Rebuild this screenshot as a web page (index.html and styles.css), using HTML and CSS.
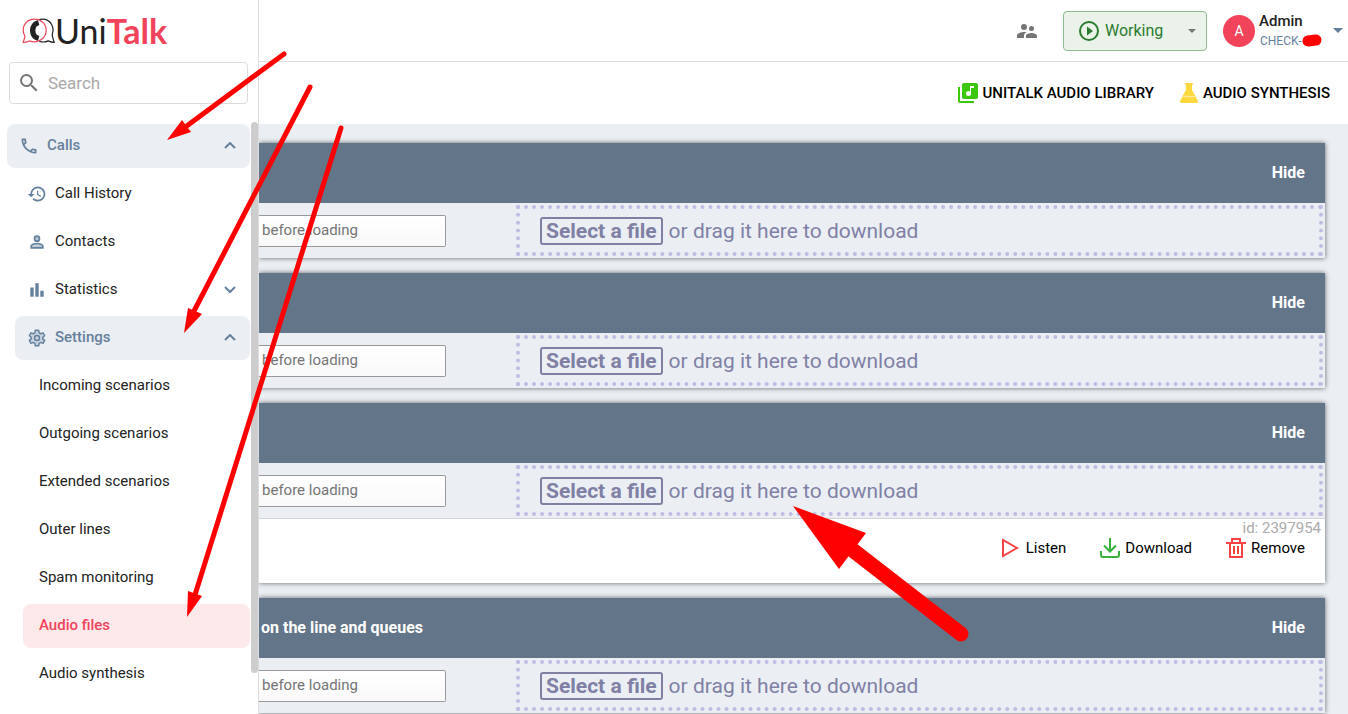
FILE: index.html
```html
<!DOCTYPE html>
<html lang="en">
<head>
    <meta charset="utf-8">
    <title>UniTalk - Audio files</title>
    <link rel="stylesheet" href="styles.css">
</head>
<body>
    <aside class="sidebar">
        <a class="logo" href="#">
            <svg width="33" height="26" viewBox="0 0 33 26" fill="none" stroke-width="1.2">
                <path stroke="#222" d="M17 1.6C19 .9 21 .9 23 1.4c6 1.500 9.500 8 7.500 14-.4 1.400-.4 2.400.2 4l1.500 5c-2.500 0-4-.5-6-1.500-3 1.500-6 1.400-9 .3"/>
                <path stroke="#f1435a" d="M13 1.200C6 1 1 6 1.200 12.500c0 2.500 1 4.500 1.800 6L1.200 24.400c2.500 0 4.500-.5 6.300-1.500C15 26 24 21 24.200 12.500 24.300 6 19 1.200 13 1.200z"/>
                <path fill="#222" d="M16 2.200c-5 .8-8 5.500-8 10.300s3 9.500 8 10.300l1.300-4.700-2.800-1.500c-1.500-2.500-1.500-5.700 0-8.200l2.800-1.400z"/>
            </svg>
            <span class="logo-uni">Uni</span><span class="logo-talk">Talk</span>
        </a>

        <label class="search">
            <svg width="24" height="24" viewBox="0 0 24 24" fill="#757575"><path d="M15.500 14h-.79l-.28-.27A6.470 6.470 0 0 0 16 9.500 6.500 6.500 0 1 0 9.500 16c1.610 0 3.090-.59 4.230-1.570l.27.28v.79l5 4.990L20.490 19l-4.990-5zm-6 0C7.010 14 5 11.990 5 9.500S7.010 5 9.500 5 14 7.010 14 9.500 11.990 14 9.500 14z"/></svg>
            <input type="search" placeholder="Search" aria-label="Search">
        </label>

        <div class="menu-wrap">
            <nav class="menu">
                <a class="item open" href="#">
                    <svg width="20" height="20" viewBox="0 0 24 24" fill="#64809c"><path d="M6.540 5c.06.89.21 1.760.45 2.590l-1.200 1.200c-.41-1.200-.67-2.470-.76-3.790h1.510m9.860 12.020c.85.24 1.720.39 2.600.45v1.490c-1.320-.09-2.590-.35-3.800-.75l1.200-1.190M7.500 3H4c-.55 0-1 .45-1 1 0 9.390 7.610 17 17 17 .55 0 1-.45 1-1v-3.490c0-.55-.45-1-1-1-1.240 0-2.450-.2-3.570-.57-.1-.04-.21-.05-.31-.05-.26 0-.51.1-.71.29l-2.200 2.200a15.150 15.150 0 0 1-6.590-6.590l2.200-2.200c.28-.28.36-.67.25-1.020A11.360 11.360 0 0 1 8.500 4c0-.55-.45-1-1-1z"/></svg>
                    <span>Calls</span>
                    <svg class="chevron up" width="12" height="8" viewBox="0 0 12 8"><path d="M1 1l5 5 5-5"/></svg>
                </a>
                <a class="item sub" href="#">
                    <svg width="20" height="20" viewBox="0 0 24 24" fill="#64809c"><path d="M13 3a9 9 0 0 0-9 9H1l3.890 3.890.07.14L9 12H6a7 7 0 1 1 7 7c-1.930 0-3.680-.79-4.940-2.060l-1.420 1.420A9 9 0 1 0 13 3zm-1 5v5l4.250 2.520.77-1.280-3.520-2.090V8H12z"/></svg>
                    <span>Call History</span>
                </a>
                <a class="item sub" href="#">
                    <svg width="20" height="20" viewBox="0 0 24 24"><path fill="#b9c7d6" d="M12 5a3 3 0 1 0 0 6 3 3 0 0 0 0-6zM5 19v-1.500c1-2 12-2.500 14 0V19z"/><path fill="#64809c" d="M12 6a2 2 0 1 1 0 4 2 2 0 0 1 0-4m0 9c2.700 0 5.800 1.290 6 2v1H6v-.99c.2-.72 3.300-2.010 6-2.010m0-11a4 4 0 1 0 0 8 4 4 0 0 0 0-8zm0 9c-2.670 0-8 1.340-8 4v3h16v-3c0-2.660-5.330-4-8-4z"/></svg>
                    <span>Contacts</span>
                </a>
                <a class="item sub" href="#">
                    <svg width="20" height="20" viewBox="0 0 24 24" fill="#64809c"><path d="M4 9h4v11H4zM16 13h4v7h-4zM10 4h4v16h-4z"/></svg>
                    <span>Statistics</span>
                    <svg class="chevron" width="12" height="8" viewBox="0 0 12 8"><path d="M1 1l5 5 5-5"/></svg>
                </a>
                <a class="item sub open" href="#">
                    <svg width="20" height="20" viewBox="0 0 24 24" fill="#c9d3de" stroke="#64809c" stroke-width="1.800" stroke-linejoin="round"><path d="M10 2.800h4l.5 3 1.900 1.100 2.800-1.100 2 3.500-2.300 1.800v2l2.300 1.800-2 3.500-2.800-1.100-1.900 1.100-.5 3h-4l-.5-3-1.900-1.100-2.800 1.100-2-3.500 2.300-1.800v-2L2.800 9.300l2-3.500 2.800 1.100 1.900-1.100z"/><circle cx="12" cy="12" r="3"/></svg>
                    <span>Settings</span>
                    <svg class="chevron up" width="12" height="8" viewBox="0 0 12 8"><path d="M1 1l5 5 5-5"/></svg>
                </a>
                <a class="item leaf" href="#"><span>Incoming scenarios</span></a>
                <a class="item leaf" href="#"><span>Outgoing scenarios</span></a>
                <a class="item leaf" href="#"><span>Extended scenarios</span></a>
                <a class="item leaf" href="#"><span>Outer lines</span></a>
                <a class="item leaf" href="#"><span>Spam monitoring</span></a>
                <a class="item leaf active" href="#"><span>Audio files</span></a>
                <a class="item leaf" href="#"><span>Audio synthesis</span></a>
            </nav>
            <div class="scroll-thumb"></div>
        </div>
    </aside>

    <div class="page">
        <header class="topbar">
            <svg class="people" width="24" height="24" viewBox="0 0 24 24" fill="#757575"><path d="M16.500 12a2.500 2.500 0 1 0 0-5 2.500 2.500 0 0 0 0 5zM9 11a3 3 0 1 0 0-6 3 3 0 0 0 0 6zm7.500 3c-1.830 0-5.500.92-5.500 2.750V19h11v-2.250c0-1.830-3.670-2.750-5.500-2.750zM9 13c-2.330 0-7 1.170-7 3.500V19h7v-2.250c0-.85.33-2.340 2.370-3.470C10.500 13.100 9.660 13 9 13z"/></svg>

            <div class="status">
                <svg width="20" height="20" viewBox="0 0 20 20"><circle cx="10" cy="10" r="9" fill="none" stroke="#2b7b2f" stroke-width="2"/><path fill="#2b7b2f" d="M8 5.500v9l6-4.500z"/></svg>
                <select aria-label="Status">
                    <option>Working</option>
                </select>
                <svg width="8" height="4" viewBox="0 0 8 4" fill="#757575"><path d="M0 0h8L4 4z"/></svg>
            </div>

            <button class="user" type="button">
                <span class="avatar">A</span>
                <span class="user-text">
                    <span class="user-name">Admin</span>
                    <span class="user-company">CHECK-</span>
                </span>
                <svg width="10" height="5" viewBox="0 0 10 5" fill="#64809c"><path d="M0 0h10L5 5z"/></svg>
            </button>
        </header>

        <div class="toolbar">
            <a class="tool" href="#">
                <svg width="20" height="20" viewBox="2 2 20 20" fill="#3cc80a"><path d="M20 2H8c-1.100 0-2 .9-2 2v12c0 1.100.9 2 2 2h12c1.100 0 2-.9 2-2V4c0-1.100-.9-2-2-2zm-2 5h-3v5.500a2.500 2.500 0 1 1-2.500-2.500c.57 0 1.080.19 1.500.51V5h4v2zM4 6H2v14c0 1.100.9 2 2 2h14v-2H4V6z"/></svg>
                UNITALK AUDIO LIBRARY
            </a>
            <a class="tool" href="#">
                <svg width="18" height="20" viewBox="0 0 18 20"><path fill="#ffd83d" d="M5 0h8v1.500h-1V7l6 11c.3 1-.2 2-1.300 2H1.300C.2 20-.3 19 0 18L6 7V1.500H5z"/><path stroke="#fff3bf" fill="none" d="M3.500 13.500c4-1.500 6 1.500 11 0"/></svg>
                AUDIO SYNTHESIS
            </a>
        </div>

        <main class="content">
            <section class="card">
                <div class="card-head">
                    <button class="hide" type="button">Hide</button>
                </div>
                <div class="upload">
                    <div class="upload-name"><input type="text" placeholder="before loading" aria-label="File name"></div>
                    <div class="drop">
                        <label class="pick">Select a file<input type="file" hidden></label>
                        <span>or drag it here to download</span>
                    </div>
                </div>
            </section>

            <section class="card">
                <div class="card-head">
                    <button class="hide" type="button">Hide</button>
                </div>
                <div class="upload">
                    <div class="upload-name"><input type="text" placeholder="before loading" aria-label="File name"></div>
                    <div class="drop">
                        <label class="pick">Select a file<input type="file" hidden></label>
                        <span>or drag it here to download</span>
                    </div>
                </div>
            </section>

            <section class="card">
                <div class="card-head">
                    <button class="hide" type="button">Hide</button>
                </div>
                <div class="upload">
                    <div class="upload-name"><input type="text" placeholder="before loading" aria-label="File name"></div>
                    <div class="drop">
                        <label class="pick">Select a file<input type="file" hidden></label>
                        <span>or drag it here to download</span>
                    </div>
                </div>
                <div class="file">
                    <div class="file-id">id: 2397954</div>
                    <div class="actions">
                        <button type="button">
                            <svg width="20" height="20" viewBox="0 0 20 20" fill="none" stroke="#f44343" stroke-width="2"><path d="M2 2v16l14-8z"/></svg>
                            Listen
                        </button>
                        <button type="button">
                            <svg width="20" height="20" viewBox="0 0 20 20" fill="none" stroke="#39b03c" stroke-width="2"><path d="M10 0v13M4 7.500l6 6 6-6M1 13v4c0 1.200.8 2 2 2h14c1.200 0 2-.8 2-2v-4"/></svg>
                            Download
                        </button>
                        <button type="button">
                            <svg width="20" height="20" viewBox="0 0 20 20" fill="none" stroke="#f44343" stroke-width="2"><path d="M0 5h20M6 5V1h8v4M4 5v14h12V5M8 8v8M12 8v8"/></svg>
                            Remove
                        </button>
                    </div>
                </div>
            </section>

            <section class="card">
                <div class="card-head">
                    <h2>on the line and queues</h2>
                    <button class="hide" type="button">Hide</button>
                </div>
                <div class="upload">
                    <div class="upload-name"><input type="text" placeholder="before loading" aria-label="File name"></div>
                    <div class="drop">
                        <label class="pick">Select a file<input type="file" hidden></label>
                        <span>or drag it here to download</span>
                    </div>
                </div>
            </section>
        </main>
    </div>

    <!-- Red arrows and the marker over the company name -->
    <svg class="marks" width="1348" height="714" viewBox="0 0 1348 714" fill="#f00" stroke="#f00" stroke-linecap="round">
        <path stroke-width="5" d="M284 54L184 128M310 87L193 313M341 128L194 598"/>
        <path stroke="none" d="M167 140l15-20 9 12zM184 333l4-25 14 6zM187 617l1-26 14 5z"/>
        <path stroke-width="15" d="M961 634L850 548"/>
        <path stroke="none" d="M793 506l73 27-27 36z"/>
        <path stroke-width="11" d="M1308 41l8-1"/>
    </svg>
</body>
</html>
```

FILE: styles.css
```css
* {
    box-sizing: border-box;
}

body {
    margin: 0;
    display: flex;
    min-height: 100vh;
    position: relative;
    overflow: hidden;
    background-color: #fff;
    color: #222;
    font-family: Roboto, sans-serif;
    font-size: 15px;
    line-height: 20px;
}

a {
    color: inherit;
    text-decoration: none;
}

button,
input,
select {
    font: inherit;
    color: inherit;
}

button {
    background: none;
    border: none;
    padding: 0;
    cursor: pointer;
}

svg {
    flex: none;
}

/* Sidebar */

.sidebar {
    flex: 0 0 259px;
    min-width: 0;
    display: flex;
    flex-direction: column;
    border-right: 1px solid #dcdcdc;
}

.logo {
    display: flex;
    align-items: center;
    height: 62px;
    padding-left: 22px;
    font-family: Lato, sans-serif;
    font-size: 34px;
    line-height: 40px;
}

.logo-uni {
    font-weight: 400;
}

.logo-talk {
    color: #f1435a;
    font-weight: 700;
}

.search {
    display: flex;
    align-items: center;
    gap: 7px;
    height: 42px;
    margin: 0 10px 18px 9px;
    padding: 0 7px;
    border: 1px solid #dcdcdc;
    border-radius: 4px;
}

.search input {
    flex: 1;
    width: 100%;
    min-width: 0;
    padding: 0;
    border: none;
    outline: none;
    background: none;
    font-size: 17px;
}

.search input::placeholder {
    color: #a8a8a8;
}

.menu-wrap {
    flex: 1;
    display: flex;
}

.menu {
    flex: 1;
    display: flex;
    flex-direction: column;
    gap: 4px;
    padding: 2px 1px 0 7px;
}

.scroll-thumb {
    width: 7px;
    height: 93%;
    border-radius: 4px;
    background-color: #cdcdcd;
}

.item {
    display: flex;
    align-items: center;
    gap: 8px;
    height: 44px;
    padding: 0 14px 2px 12px;
    border-radius: 8px;
}

.item svg {
    margin-top: 2px;
}

.sub {
    margin-left: 8px;
}

.leaf {
    margin-left: 16px;
    padding-left: 16px;
}

.open {
    background-color: #ebeef2;
    color: #64809c;
    font-weight: 500;
}

.active {
    background-color: #fde8ea;
    color: #f1435a;
    font-weight: 500;
}

.chevron {
    margin-left: auto;
    fill: none;
    stroke: #64809c;
    stroke-width: 2;
}

.up path {
    transform: translateY(7px) scaleY(-1);
}

/* Top bar */

.page {
    flex: 1;
    min-width: 0;
    display: flex;
    flex-direction: column;
}

.topbar {
    display: flex;
    align-items: center;
    justify-content: flex-end;
    height: 62px;
    padding-right: 5px;
    border-bottom: 1px solid #dcdcdc;
}

.people {
    margin-right: 24px;
}

.status {
    display: flex;
    align-items: center;
    width: 144px;
    height: 40px;
    margin-right: 16px;
    padding: 0 10px 0 15px;
    border: 1px solid #8fbc91;
    border-radius: 4px;
    background-color: #eaf2ea;
    color: #2b7b2f;
}

.status select {
    flex: 1;
    min-width: 0;
    padding: 0 0 0 6px;
    border: none;
    background: none;
    appearance: none;
    font-size: 16px;
    line-height: 24px;
}

.user {
    display: flex;
    align-items: center;
    width: 120px;
    text-align: left;
}

.avatar {
    width: 32px;
    height: 32px;
    border-radius: 50%;
    background-color: #f1435a;
    color: #fff;
    font-size: 14px;
    line-height: 32px;
    text-align: center;
}

.user-text {
    flex: 1;
    display: flex;
    flex-direction: column;
    padding-left: 4px;
}

.user-name {
    font-size: 15px;
    font-weight: 500;
}

.user-company {
    padding-left: 1px;
    color: #64809c;
    font-size: 12px;
}

/* Page tools */

.toolbar {
    display: flex;
    align-items: center;
    justify-content: flex-end;
    gap: 26px;
    height: 62px;
    padding-right: 18px;
    color: #000;
    font-weight: 500;
}

.tool {
    display: flex;
    align-items: center;
    gap: 5px;
}

/* Audio cards */

.content {
    flex: 1;
    display: flex;
    flex-direction: column;
    gap: 15px;
    padding: 19px 23px 0 0;
    overflow: hidden;
    background-color: #ebeff4;
}

.card {
    box-shadow: 0 0 5px rgba(0, 0, 0, 0.6);
}

.card-head {
    display: flex;
    align-items: center;
    height: 60px;
    padding: 0 20px 0 2px;
    background-color: #637589;
    color: #fff;
}

.card-head h2 {
    margin: 0;
    font-size: 16px;
    font-weight: 700;
}

.hide {
    margin-left: auto;
    font-size: 16px;
    font-weight: 700;
}

.upload {
    display: flex;
    height: 55px;
    padding: 2px;
    padding-left: 0;
    background-color: #ebeff4;
}

.upload-name {
    flex: 0 0 257px;
    display: flex;
    align-items: center;
    padding-right: 70px;
}

.upload-name input {
    width: 100%;
    height: 32px;
    padding: 0 3px 2px;
    border: 1px solid #999;
    border-left: none;
    border-radius: 0 2px 2px 0;
    background: linear-gradient(#fff, #f9f9f9);
}

.upload-name input::placeholder {
    color: #757575;
}

.drop {
    flex: 1;
    display: flex;
    align-items: center;
    gap: 6px;
    padding-left: 20px;
    border: 4px dotted #bfbde3;
    color: #8080a5;
    font-size: 21px;
    line-height: 24px;
}

.pick {
    padding: 0 4px;
    border: 2px solid #8080a5;
    border-radius: 3px;
    font-weight: 700;
    cursor: pointer;
}

.file {
    height: 65px;
    padding-right: 4px;
    border-top: 1px solid #d0d4d8;
    background-color: #fff;
    color: #000;
}

.file-id {
    color: #aaa;
    line-height: 19px;
    text-align: right;
}

.actions {
    display: flex;
    justify-content: flex-end;
    gap: 34px;
    padding-right: 16px;
}

.actions button {
    display: flex;
    align-items: center;
    gap: 5px;
}

.marks {
    position: absolute;
    top: 0;
    left: 0;
    pointer-events: none;
}
```
